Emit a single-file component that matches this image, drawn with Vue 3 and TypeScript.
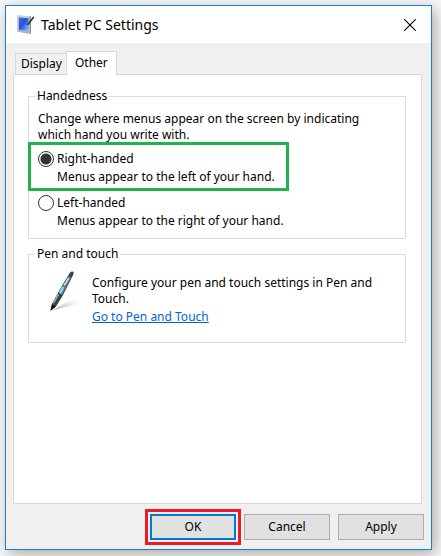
<script setup lang="ts">
import { ref } from 'vue'

type Tab = 'Display' | 'Other'
type Hand = 'right' | 'left'

const tabs: Tab[] = ['Display', 'Other']
const activeTab = ref<Tab>('Other')
const hand = ref<Hand>('right')

const options: { value: Hand; title: string; text: string; marked: boolean }[] = [
  { value: 'right', title: 'Right-handed', text: 'Menus appear to the left of your hand.', marked: true },
  { value: 'left', title: 'Left-handed', text: 'Menus appear to the right of your hand.', marked: false },
]
</script>

<template>
  <div class="desktop">
    <main class="window">
      <header class="titlebar">
        <svg class="app-icon" viewBox="0 0 18 20" aria-hidden="true">
          <defs>
            <linearGradient id="screen" x1="0" y1="0" x2="1" y2="1">
              <stop offset="0" stop-color="#3f74dc" />
              <stop offset="0.45" stop-color="#1f52dc" />
              <stop offset="1" stop-color="#8fc0ff" />
            </linearGradient>
          </defs>
          <path d="M0.4 0.6 12.8 1.2V19L0.4 16.8Z" fill="#a9b4c4" />
          <path d="M0.4 0.6 12.8 1.2V2.8L0.4 2.2Z" fill="#c9d0da" />
          <path d="M12.8 1.2 13.8 1V18.2L12.8 19.2Z" fill="#6a7788" />
          <path d="M2 2.6 11.4 3.2V16L2 14.6Z" fill="url(#screen)" />
          <path d="M16.4 2.4 10 10.6" stroke="#2c323c" stroke-width="1.6" stroke-linecap="round" />
          <path d="M10.6 9.9 9 11.8" stroke="#dfe9ff" stroke-width="1" />
        </svg>
        <h1 class="title">Tablet PC Settings</h1>
        <button class="close" type="button" aria-label="Close">
          <svg viewBox="0 0 12 12" aria-hidden="true">
            <path d="M0.3 0.3 11.7 11.7M11.7 0.3 0.3 11.7" stroke="#000" stroke-width="1.1" />
          </svg>
        </button>
      </header>

      <div class="tabs" role="tablist">
        <button
          v-for="tab in tabs"
          :key="tab"
          type="button"
          role="tab"
          class="tab"
          :class="{ active: tab === activeTab }"
          :aria-selected="tab === activeTab"
          @click="activeTab = tab"
        >{{ tab }}</button>
      </div>

      <section class="panel" role="tabpanel">
        <fieldset class="group">
          <legend>Handedness</legend>
          <p class="intro">Change where menus appear on the screen by indicating which hand you write with.</p>
          <div class="options">
            <label v-for="option in options" :key="option.value" class="option">
              <input v-model="hand" type="radio" name="hand" :value="option.value" />
              <span class="option-text">
                <span>{{ option.title }}</span>
                <span>{{ option.text }}</span>
              </span>
              <span v-if="option.marked" class="mark" />
            </label>
          </div>
        </fieldset>

        <fieldset class="group">
          <legend>Pen and touch</legend>
          <div class="pen-row">
            <svg class="pen" viewBox="0 0 38 44" aria-hidden="true">
              <defs>
                <linearGradient id="shade" x1="0" y1="1" x2="1" y2="0.4">
                  <stop offset="0" stop-color="#888" stop-opacity="0.8" />
                  <stop offset="1" stop-color="#ccc" stop-opacity="0" />
                </linearGradient>
              </defs>
              <path d="M3 40.5 19 31.5Q28 28 36 29.5 30 34 18 36.5Z" fill="url(#shade)" />
              <path d="M1.4 40.8 2.6 34.5 8.6 23.5 20.4 3.4Q21.8 1 23.6 1.6 25.4 2.4 24.2 4.8L13.8 25.6 7 36.4Z" fill="#3a4248" />
              <path d="M19.4 5.6 22.6 7.6 17.6 17 13.6 14.8Z" fill="#56686f" />
              <path d="M19 7.4 20.6 8.4 16.2 16 14.4 15Z" fill="#b9dcec" />
              <path d="M13.4 15 17.2 17.2 13 25 9.4 22.8Z" fill="#4a88aa" />
              <path d="M13.4 16.4 15.2 17.5 12 23.8 10.2 22.6Z" fill="#9ad8f5" />
              <path d="M8.8 23.8 10.2 24.7 5 33.6 3.6 33.2Z" fill="#a8adb0" />
              <path d="M3 35 7 36.4 1.4 40.8Z" fill="#111" />
            </svg>
            <div class="pen-text">
              <p>Configure your pen and touch settings in Pen and Touch.</p>
              <a href="#pen-and-touch">Go to Pen and Touch</a>
            </div>
          </div>
        </fieldset>
      </section>

      <footer class="actions">
        <button class="action primary" type="button">OK<span class="mark" /></button>
        <button class="action" type="button">Cancel</button>
        <button class="action" type="button">Apply</button>
      </footer>
    </main>
  </div>
</template>

<style>
body {
  background: #f8f8f8;
}
</style>

<style scoped>
.desktop {
  box-sizing: border-box;
  min-height: 100vh;
  padding: 5px 9px 6px 5px;
  display: flex;
  overflow: hidden;
  color: #000;
  font: 12px/16px "Noto Sans", Tahoma, sans-serif;
}

.window {
  flex: 1;
  min-width: 0;
  display: flex;
  flex-direction: column;
  border: 1px solid #1a7fd4;
  background: #f0f0f0;
  box-shadow: 3px 4px 14px rgba(0, 0, 0, 0.32);
}

.titlebar {
  display: flex;
  align-items: center;
  height: 37px;
  padding: 0 15px 0 11px;
  background: #fff;
}

.app-icon {
  width: 18px;
  height: 20px;
}

.title {
  flex: 1;
  margin: 0 0 0 6px;
  font: 400 14px/20px "Noto Sans", sans-serif;
}

.close {
  display: flex;
  padding: 0;
  border: 0;
  background: none;
}

.close svg {
  width: 12px;
  height: 12px;
}

.tabs {
  display: flex;
  align-items: flex-end;
  margin-top: 8px;
  padding-left: 9px;
}

.tab {
  height: 21px;
  padding: 0 4px 0 5px;
  border: 1px solid #d9d9d9;
  border-bottom: 0;
  background: #f0f0f0;
  color: inherit;
  font: inherit;
}

.tab.active {
  z-index: 1;
  height: 24px;
  margin: 0 0 -1px -1px;
  padding: 0 8px 2px;
  background: #fff;
}

.panel {
  flex: 1;
  display: flex;
  flex-direction: column;
  gap: 7px;
  margin: 0 9px 0 7px;
  padding: 13px 15px 13px 14px;
  border: 1px solid #d9d9d9;
  background: #fff;
}

.group {
  min-width: 0;
  margin: 0;
  padding: 7px 9px 9px;
  border: 1px solid #dcdcdc;
}

.group legend {
  margin-left: -3px;
  padding: 0 2px;
}

.intro,
.pen-text p {
  margin: 0;
}

.intro {
  max-width: 340px;
}

.options {
  display: flex;
  flex-direction: column;
  align-items: flex-start;
  gap: 10px;
  margin-top: 8px;
}

.option {
  position: relative;
  display: flex;
  gap: 3px;
}

.option input {
  appearance: none;
  box-sizing: border-box;
  flex: none;
  width: 16px;
  height: 16px;
  margin: 0;
  border: 1px solid #333;
  border-radius: 50%;
  background: #fff;
}

.option input:checked {
  background: radial-gradient(circle, #333 0 5px, #fff 6px);
}

.option-text {
  display: flex;
  flex-direction: column;
  gap: 2px;
}

.mark {
  position: absolute;
  pointer-events: none;
}

.option .mark {
  inset: -9px -14px -6px -10px;
  border: 3px solid #22b14c;
}

.pen-row {
  display: flex;
  gap: 5px;
  padding: 1px 0 8px 11px;
}

.pen {
  flex: none;
  width: 38px;
  height: 44px;
}

.pen-text {
  padding-top: 5px;
}

.pen-text a {
  display: inline-block;
  margin-top: 2px;
  color: #0066cc;
}

.actions {
  display: flex;
  justify-content: flex-end;
  gap: 8px;
  padding: 10px 7px 9px;
}

.action {
  position: relative;
  width: 86px;
  height: 26px;
  padding: 0;
  border: 1px solid #adadad;
  background: #e1e1e1;
  color: inherit;
  font: inherit;
}

.action.primary {
  border: 2px solid #0078d7;
}

.action .mark {
  inset: -7px;
  border: 3px solid #ed1c24;
}
</style>
